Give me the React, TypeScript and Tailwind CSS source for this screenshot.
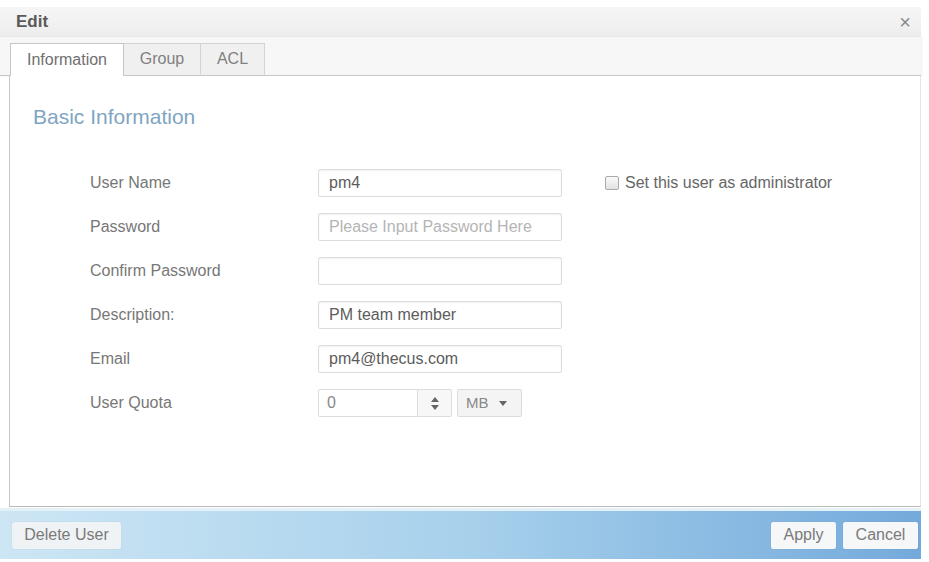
import React from "react";

const font = { fontFamily: '"Liberation Sans", Arial, sans-serif' };

function Row({ label, children }: { label: string; children: React.ReactNode }) {
  return (
    <div className="flex h-[28px] items-center">
      <div className="w-[228px] pl-[80px] box-content text-[16px] text-[#777]">{label}</div>
      {children}
    </div>
  );
}

function TextBox({ value, placeholder }: { value?: string; placeholder?: string }) {
  return (
    <div className="flex h-[28px] w-[244px] items-center rounded-[2px] border border-[#dcdcdc] bg-white pl-[10px] text-[16px] shadow-[inset_0_1px_2px_rgba(0,0,0,0.06)]">
      {value ? (
        <span className="text-[#5c5c5c]">{value}</span>
      ) : placeholder ? (
        <span className="text-[#b5b5b5]">{placeholder}</span>
      ) : null}
    </div>
  );
}

export default function App() {
  return (
    <div className="h-[562px] w-[929px] overflow-hidden bg-white" style={font}>
      <div className="w-[921px] pt-[7px]">
        {/* Title bar */}
        <div className="flex h-[30px] items-center justify-between bg-gradient-to-b from-[#f6f6f6] to-[#ededed] pl-[16px] pr-[10px]">
          <span className="text-[17px] font-bold text-[#5a5a5a]">Edit</span>
          <span className="text-[20px] leading-none text-[#8a8a8a]">×</span>
        </div>
        {/* Tab strip */}
        <div className="flex h-[39px] items-end border-b border-[#c6c6c6] bg-[#f7f7f7] pl-[10px] shadow-[1px_0_2px_rgba(0,0,0,0.08)]">
          <div className="-mb-px flex h-[33px] w-[114px] items-center justify-center border border-b-0 border-[#c6c6c6] bg-white text-[16px] text-[#707070]">
            Information
          </div>
          <div className="flex h-[32px] w-[77px] items-center justify-center border-y border-r border-t-[#d3d3d3] border-r-[#d3d3d3] border-b-transparent bg-[#f0f0f0] text-[16px] text-[#808080]">
            Group
          </div>
          <div className="flex h-[32px] w-[64px] items-center justify-center border-y border-r border-t-[#d3d3d3] border-r-[#d3d3d3] border-b-transparent bg-[#f0f0f0] text-[16px] text-[#808080]">
            ACL
          </div>
        </div>
        {/* Content */}
        <div className="ml-[9px] h-[431px] border-x border-b border-l-[#c6c6c6] border-r-[#e6e6e6] border-b-[#b9b9b9] bg-white">
          <div className="pl-[23px] pt-[29px] text-[21px] leading-[24px] text-[#80a5c2]">Basic Information</div>
          <div className="mt-[40px] flex flex-col gap-[16px]">
            <Row label="User Name">
              <TextBox value="pm4" />
              <div className="ml-[43px] flex items-center gap-[6px]">
                <div className="h-[14px] w-[14px] rounded-[2px] border border-[#a9a9a9] bg-gradient-to-b from-[#fafafa] to-[#e2e2e2]" />
                <span className="text-[16px] text-[#666]">Set this user as administrator</span>
              </div>
            </Row>
            <Row label="Password">
              <TextBox placeholder="Please Input Password Here" />
            </Row>
            <Row label="Confirm Password">
              <TextBox />
            </Row>
            <Row label="Description:">
              <TextBox value="PM team member" />
            </Row>
            <Row label="Email">
              <TextBox value="pm4@thecus.com" />
            </Row>
            <Row label="User Quota">
              <div className="flex h-[28px] items-center">
                <div className="flex h-[28px] w-[100px] items-center rounded-l-[2px] border border-[#dcdcdc] bg-white pl-[8px] text-[16px] text-[#888]">
                  0
                </div>
                <div className="flex h-[28px] w-[34px] flex-col items-center justify-center gap-[3px] rounded-r-[2px] border-y border-r border-[#dcdcdc] bg-[#f7f7f7]">
                  <svg width="8" height="5" viewBox="0 0 8 5"><path d="M4 0 L8 5 L0 5 Z" fill="#666" /></svg>
                  <svg width="8" height="5" viewBox="0 0 8 5"><path d="M0 0 L8 0 L4 5 Z" fill="#666" /></svg>
                </div>
                <div className="ml-[5px] flex h-[28px] w-[65px] items-center gap-[10px] rounded-[2px] border border-[#dcdcdc] bg-[#f4f4f4] pl-[8px] text-[15px] text-[#888]">
                  <span>MB</span>
                  <svg width="8" height="5" viewBox="0 0 8 5"><path d="M0 0 L8 0 L4 5 Z" fill="#666" /></svg>
                </div>
              </div>
            </Row>
          </div>
        </div>
        {/* Footer */}
        <div className="mt-[1px] flex h-[51px] items-center justify-between border-t-[3px] border-t-[#e4f1f9] bg-gradient-to-r from-[#cde6f4] via-[#a8d1ec] to-[#74aadb] pl-[12px] pr-[3px]">
          <div className="flex h-[27px] w-[109px] items-center justify-center rounded-[2px] bg-[#f0f3f5] text-[16px] text-[#7a7a7a] shadow-[0_0_1px_rgba(0,0,0,0.2)]">
            Delete User
          </div>
          <div className="flex gap-[7px]">
            <div className="flex h-[27px] w-[65px] items-center justify-center rounded-[2px] bg-[#f5f7f9] text-[16px] text-[#7a7a7a] shadow-[0_0_1px_rgba(0,0,0,0.2)]">
              Apply
            </div>
            <div className="flex h-[27px] w-[75px] items-center justify-center rounded-[2px] bg-[#f5f7f9] text-[16px] text-[#7a7a7a] shadow-[0_0_1px_rgba(0,0,0,0.2)]">
              Cancel
            </div>
          </div>
        </div>
      </div>
    </div>
  );
}
